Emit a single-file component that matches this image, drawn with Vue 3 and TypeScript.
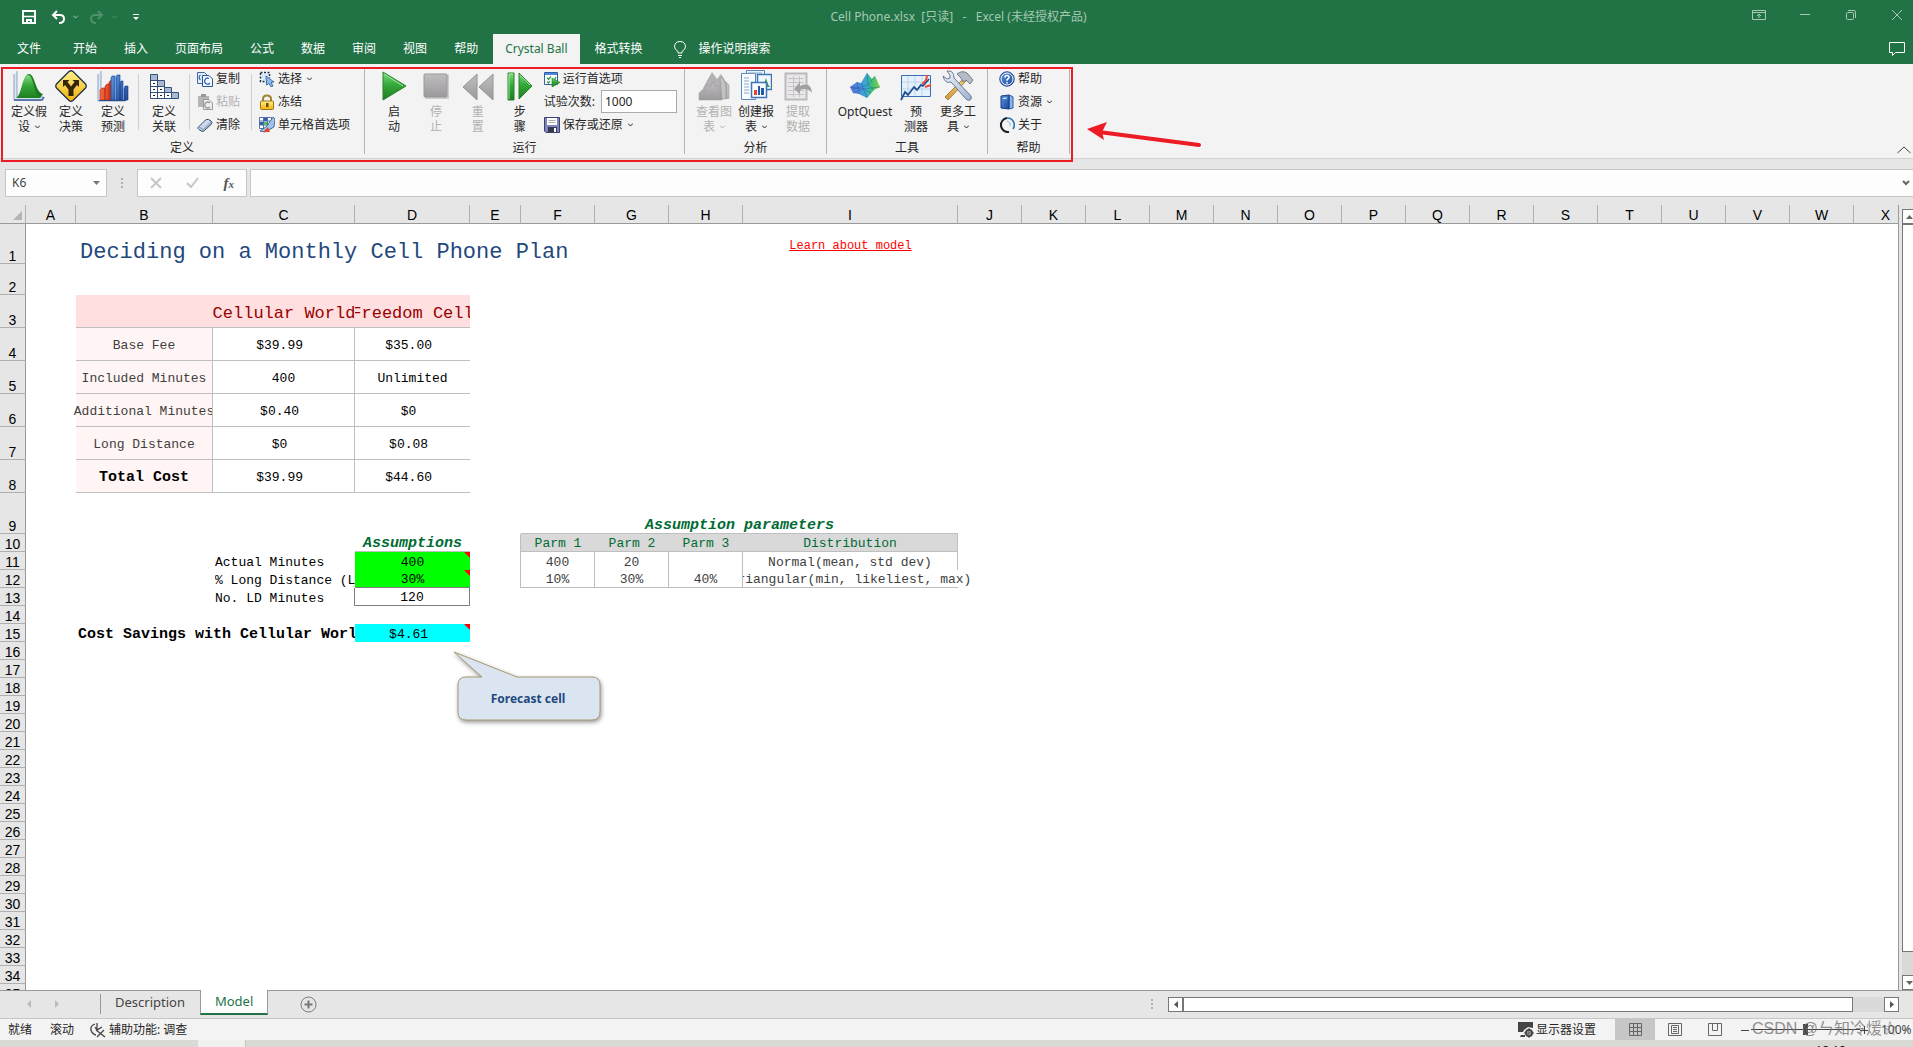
<script setup lang="ts">
import { ref } from 'vue'

interface BigItem { kind: 'big'; icon: string; lines: string[]; caret?: boolean; off?: boolean; wide?: boolean }
interface SmallItem { icon?: string; text: string; caret?: boolean; off?: boolean; input?: boolean }
interface ColItem { kind: 'col'; rows: SmallItem[] }
interface SepItem { kind: 'sep' }
interface Group { name: string; cls: string; items: (BigItem | ColItem | SepItem)[] }
interface Cell { t?: string; c?: string; span?: number; link?: boolean; note?: boolean }

const tabs: string[] = ['文件', '开始', '插入', '页面布局', '公式', '数据', '审阅', '视图', '帮助', 'Crystal Ball', '格式转换']
const trials = ref('1000')
const zoom = ref(50)

const groups: Group[] = [
  {
    name: '定义', cls: 'g-define', items: [
      { kind: 'big', icon: 'assume', lines: ['定义假', '设'], caret: true },
      { kind: 'big', icon: 'decide', lines: ['定义', '决策'] },
      { kind: 'big', icon: 'forecast', lines: ['定义', '预测'] },
      { kind: 'sep' },
      { kind: 'big', icon: 'correl', lines: ['定义', '关联'] },
      { kind: 'sep' },
      { kind: 'col', rows: [{ icon: 'copy', text: '复制' }, { icon: 'paste', text: '粘贴', off: true }, { icon: 'clear', text: '清除' }] },
      { kind: 'sep' },
      { kind: 'col', rows: [{ icon: 'select', text: '选择', caret: true }, { icon: 'lock', text: '冻结' }, { icon: 'cells', text: '单元格首选项' }] },
    ],
  },
  {
    name: '运行', cls: 'g-run', items: [
      { kind: 'big', icon: 'play', lines: ['启', '动'] },
      { kind: 'big', icon: 'stop', lines: ['停', '止'], off: true },
      { kind: 'big', icon: 'rewind', lines: ['重', '置'], off: true },
      { kind: 'big', icon: 'step', lines: ['步', '骤'] },
      { kind: 'col', rows: [{ icon: 'runpref', text: '运行首选项' }, { text: '试验次数:', input: true }, { icon: 'save', text: '保存或还原', caret: true }] },
    ],
  },
  {
    name: '分析', cls: 'g-analyze', items: [
      { kind: 'big', icon: 'charts', lines: ['查看图', '表'], caret: true, off: true },
      { kind: 'big', icon: 'report', lines: ['创建报', '表'], caret: true },
      { kind: 'big', icon: 'extract', lines: ['提取', '数据'], off: true },
    ],
  },
  {
    name: '工具', cls: 'g-tools', items: [
      { kind: 'big', icon: 'opt', lines: ['OptQuest'], wide: true },
      { kind: 'big', icon: 'predict', lines: ['预', '测器'] },
      { kind: 'big', icon: 'tools', lines: ['更多工', '具'], caret: true },
    ],
  },
  {
    name: '帮助', cls: 'g-help', items: [
      { kind: 'col', rows: [{ icon: 'help', text: '帮助' }, { icon: 'book', text: '资源', caret: true }, { icon: 'about', text: '关于' }] },
    ],
  },
]

const icons: Record<string, string> = {
  assume: '<path d="M1 5 4 1V27H30L28 30H1Z" fill="#dbe6f5"/><path d="M1 4V30H28M4 1V27H30" fill="none" stroke="#8fa3c0"/><path d="M1 30H29L31 27" fill="none" stroke="#3d5f9e" stroke-width="1.5"/><path d="M5 28C10 24 10 4 16 4 22 4 22 22 30 24L27 28Z" fill="#1d7a22"/><path d="M3 28C9 25 9 5 15 5 21 5 20 24 27 28Z" fill="url(#gGreen)"/>',
  decide: '<path d="M14 1.500Q16 0 18 1.500L30.500 14Q32 16 30.500 18L18 30.500Q16 32 14 30.500L1.500 18Q0 16 1.500 14Z" fill="url(#gYellow)" stroke="#23304a" stroke-width="1.300"/><path d="M13.500 26V19.500L10 15 8 17V10H14.500L12.500 12 16 16.500 19.500 12 17.500 10H24V17L22 15 18.500 19.500V26Z" fill="#33260a"/>',
  forecast: '<path d="M1 5 4 1V27H30L28 31H1Z" fill="#dbe6f5"/><path d="M1 4V31H28M4 1V27" fill="none" stroke="#8fa3c0"/><path d="M3 20 5 18H8V30H3ZM8 16 10 14H13V30H8ZM12 12 14 10H15V30H12Z" fill="url(#gRed)" stroke="#b02a12" stroke-width=".6"/><path d="M14 8 15 6H18V30H14ZM19 7 20 5H23V30H19ZM23 13 24 11H26V30H23ZM27 19 28 16H31V30H27Z" fill="url(#gBlue)" stroke="#173c86" stroke-width=".6"/><path d="M2 30.500H29L31 28" fill="none" stroke="#274b8f"/>',
  correl: '<path d="M2.500 4.500H9.500V10.500H16.500V17.500H23.500V22.500H30.500V28.500H2.500Z" fill="#fff" stroke="#324f80"/><path d="M3 5H9V10H3ZM10 11H16V17H10ZM17 18H23V22H17ZM24 23H30V28H24Z" fill="#a9bad0"/><path d="M2.500 10.500H9.500V28M2.500 16.500H16.500V28M2.500 22.500H23.500V28" fill="none" stroke="#324f80"/><path d="M5 13.500H7M5 19.500H7M5 25.500H7M12 19.500H14M12 25.500H14M19 25.500H21" stroke="#222"/>',
  copy: '<path d="M.5 1.500H7.500L10.500 4.500V12.500H.5Z" fill="#e4ecf8" stroke="#4267a5"/><path d="M5.500 4.500H12L15.500 8V15.500H5.500Z" fill="#f4f8ff" stroke="#2e559b"/><path d="M12 7.500A3 3 0 1 0 13 12M3.500 4A3 3 0 0 0 3.500 9" fill="none" stroke="#3e6cba" stroke-width="1.300"/>',
  paste: '<path d="M1 2H12V13H1Z" fill="#b5b5b5"/><path d="M4 0H9V3H4Z" fill="#999"/><path d="M6.500 5.500H12L15.500 9V15.500H6.500Z" fill="#eee" stroke="#999"/><path d="M13 9A3 3 0 1 0 13 13" fill="none" stroke="#999" stroke-width="1.300"/>',
  clear: '<path d="M1 10.500 8.500 3Q10 2 11.500 2.500L14 4Q15.500 5.500 14.500 7L7.500 13.500Q6 15 4.500 14L2 12.500Q.5 11.500 1 10.500Z" fill="url(#gIce)" stroke="#33476e"/><path d="M2 10 6.500 12.500 14 5.500" fill="none" stroke="#7b93b8"/>',
  select: '<path d="M1.500 2V10.500H8M1.500 1.500H10.500V7" fill="none" stroke="#16304f" stroke-width="1.500" stroke-dasharray="2 1.500"/><path d="M3 3H9V9H3Z" fill="#d6e8fb"/><path d="M7 5 15 11 12 11.500 14 15 12 16 10 12.500 7.500 14Z" fill="#8dbbea" stroke="#2a5690" stroke-width=".8"/>',
  lock: '<path d="M4 8V5Q4 1.500 8 1.500T12 5V8" fill="none" stroke="#a28332" stroke-width="2"/><rect x="1.500" y="7" width="13" height="8.500" rx="1" fill="url(#gYellow)" stroke="#9d7515"/><path d="M7 9H9.500V13H7Z" fill="#6b4b0c"/>',
  cells: '<path d="M.5 .5H12.500V11.500H.5Z" fill="#fff" stroke="#5671a8"/><path d="M4.500 0V12M8.500 0V12M0 4H12M0 8H12" stroke="#5671a8"/><path d="M5 1H8V4H5ZM1 5H4V8H1Z" fill="#2b60b8"/><path d="M5 5H8V8H5Z" fill="#52c152"/><path d="M14 0 16 2 15 10 6 15 1 14 8 9Z" fill="#9fc3ea" stroke="#2a538f" stroke-width=".8"/><path d="M4 15 9 10 11 15Z" fill="#e2462a"/>',
  play: '<path d="M5 2 28 16 5 30Z" fill="url(#gGreen)" stroke="#27812b"/><path d="M6 4 25 16" stroke="#9be79d"/>',
  stop: '<rect x="5" y="5" width="24" height="24" fill="#ccc"/><rect x="4" y="4" width="23" height="23" rx="1" fill="url(#gGray)" stroke="#999"/>',
  rewind: '<path d="M15 4V30L1 17ZM31 4V30L17 17Z" fill="url(#gGray)" stroke="#969496"/>',
  step: '<path d="M4 3H10V30H4Z" fill="url(#gGreen)" stroke="#27812b"/><path d="M15 3 28 16 15 29Z" fill="url(#gGreen)" stroke="#27812b"/><path d="M5 29V4H9M16 5 26 15" fill="none" stroke="#9be79d"/>',
  runpref: '<path d="M.5 1.500H13.500V13.500H.5Z" fill="#fff" stroke="#2f5ea8"/><path d="M1 2H13V4H1Z" fill="#4f86d5"/><path d="M3 6.500 4.500 8.500 7 5.500M3 10.500 4.500 12 6 10M8 8.500 10 10 12 6" fill="none" stroke="#2a9a3a" stroke-width="1.200"/><path d="M8 7 16 11.500 8 16Z" fill="url(#gGreen)" stroke="#1f7c26" stroke-width=".6"/>',
  save: '<path d="M.5 .5H15.500V15.500H2L.5 14Z" fill="#7f85bf" stroke="#3b4168"/><path d="M3 1H13V8H3Z" fill="#fff"/><path d="M4.500 3.500H11.500M4.500 5.500H11.500" stroke="#aaa"/><path d="M4 10H13V15H4Z" fill="#343a4c"/><path d="M10 11H12V15H10Z" fill="#fff"/>',
  charts: '<path d="M4 20 10 9 14 2 19 9 23 4 28 12 31 29H6Z" fill="#b3b1b3"/><path d="M22 9 24 7 28 14V29H24ZM28 12 31 15V28H29Z" fill="#c3c1c3" stroke="#8e8c8e" stroke-width=".5"/><path d="M1 30V23L4 20 6 22 9 14 12 17 15 12 18 17 21 15 24 30Z" fill="url(#gGray)" stroke="#999" stroke-width=".5"/>',
  report: '<path d="M6.500 .5H24.500V23H6.500Z" fill="#eaf2fc" stroke="#5b88bc"/><path d="M1.500 3.500H15.500V29.500H1.500Z" fill="#f8fbff" stroke="#5b88bc"/><path d="M4 8H9M4 11H9M4 14H9M4 17H9M4 20H9M4 23H9M8 3H22" stroke="#8da8c8"/><path d="M17.500 4.500H31.500V19.500H17.500Z" fill="#f3f8ff" stroke="#3d75b6" stroke-width="1.500"/><path d="M22 16Q24 14 26 8 28 15 30 17H22Z" fill="#3da442"/><path d="M11.500 12.500H26.500V27.500H11.500Z" fill="#f8fbff" stroke="#3d75b6" stroke-width="1.500"/><path d="M14 20H17V25H14Z" fill="#e04527"/><path d="M18 16H20V25H18ZM21 18H24V25H21Z" fill="#2359ae"/>',
  extract: '<rect x="3.500" y="3.500" width="21" height="26" fill="#e9e7e9" stroke="#bcbabc" stroke-width="2"/><path d="M6 8.500H22M6 12.500H22M6 16.500H22M6 20.500H22M6 24.500H22M11.500 6V27M17.500 6V27" stroke="#c6c4c6"/><path d="M12 19 18 12V16Q29 11 30 23 25 17 18 20V24Z" fill="#a3a1a3"/>',
  opt: '<path d="M1 17 8 12 12 13 18 3 23 9 26 6 31 17 25 20 18 28 10 24 4 23Z" fill="url(#gSpec)"/><path d="M8 12 10 24M12 13 18 28M18 3 19 15 25 20M26 6 19 15 4 19M1 17 14 19 31 17M4 23 14 19 22 23" fill="none" stroke="#2b4f9a" stroke-opacity=".6" stroke-width=".7"/>',
  predict: '<path d="M1.500 5.500H30.500V26.500H1.500Z" fill="#e5f1fc" stroke="#3a6eb0"/><path d="M2 12H30M2 19H30M8 6V26M15 6V26M22 6V26" stroke="#bcd3ea"/><path d="M1 30 5 22 8 25 14 17 17 20 21 15 23 16 29 9" fill="none" stroke="#1f4f91" stroke-width="1.800"/><path d="M22 14Q27 11 27 5M25 17 31 15" fill="none" stroke="#ef4a32" stroke-width="2"/>',
  tools: '<path d="M25 10 6 30 3 27 22 8Z" fill="url(#gWood)" stroke="#8a6119" stroke-width=".7"/><path d="M15 4Q20 0 25 3L31 10 28 14 24 10 21 12 19 8Z" fill="#b5bcc7" stroke="#5c6675" stroke-width=".8"/><path d="M1 6 5 9 8 8 8 5 5 1Q12 0 12 8L29 26Q30 29 28 30 26 31 24 29L9 12Q3 14 1 6Z" fill="url(#gIce)" stroke="#5b6b84" stroke-width=".9"/>',
  help: '<circle cx="8" cy="8" r="7.200" fill="url(#gBlue)" stroke="#174289"/><circle cx="8" cy="8" r="6" fill="none" stroke="#fff"/><path d="M6 6.500Q6 4.500 8 4.500T10 6.500Q10 7.500 8.500 8.300 8 8.600 8 9.800M8 11V12.500" fill="none" stroke="#fff" stroke-width="1.600"/>',
  book: '<path d="M2 2 10 1V15L2 14Z" fill="url(#gBlue)" stroke="#173d82"/><path d="M10.500 1 14 3V14L10.500 15Z" fill="#8fb5e8" stroke="#2d5ca6"/><path d="M4 4.500 8 4" stroke="#fff"/>',
  about: '<path d="M10 15A7 7 0 1 1 8 1" fill="none" stroke="#171c25" stroke-width="2"/><path d="M8 1A7 7 0 0 1 14 12" fill="none" stroke="#2770bb" stroke-width="1.600"/><path d="M8 4Q12 5 11 9" fill="none" stroke="#82b5e5"/>',
}

const cols: string[] = 'ABCDEFGHIJKLMNOPQRSTUVWX'.split('')
const colClass = (c: string): string => ('ABCDEI'.includes(c) ? 'w-' + c.toLowerCase() : 'FGH'.includes(c) ? 'w-f' : 'w-n')
const rows: number[] = Array.from({ length: 35 }, (_, i) => i + 1)
const rowClass = (r: number): string => (r === 1 ? 'h1' : r === 2 ? 'h2' : r < 9 ? 'h3' : r === 9 ? 'h9' : 'h10')

const cells: Record<string, Cell> = {
  B1: { t: 'Deciding on a Monthly Cell Phone Plan', c: 'title', span: 5 },
  I1: { t: 'Learn about model', c: 'mid', link: true },
  B3: { c: 'pink line' }, C3: { t: 'Cellular World', c: 'pink line mid cut' }, D3: { t: 'Freedom Cell', c: 'pink line mid cut' },
  B4: { t: 'Base Fee', c: 'side' }, C4: { t: '$39.99 ', c: 'box' }, D4: { t: '$35.00 ', c: 'line mid' },
  B5: { t: 'Included Minutes', c: 'side' }, C5: { t: '400', c: 'box' }, D5: { t: 'Unlimited', c: 'line mid' },
  B6: { t: 'Additional Minutes', c: 'side cut-right' }, C6: { t: '$0.40 ', c: 'box' }, D6: { t: '$0 ', c: 'line mid' },
  B7: { t: 'Long Distance', c: 'side' }, C7: { t: '$0 ', c: 'box' }, D7: { t: '$0.08 ', c: 'line mid' },
  B8: { t: 'Total Cost', c: 'side strong' }, C8: { t: '$39.99 ', c: 'box' }, D8: { t: '$44.60 ', c: 'line mid' },
  F9: { t: 'Assumption parameters', c: 'line mid heading low', span: 4 },
  D10: { t: 'Assumptions', c: 'line mid heading' }, E10: { c: 'edge' },
  F10: { t: 'Parm 1', c: 'param' }, G10: { t: 'Parm 2', c: 'param' }, H10: { t: 'Parm 3', c: 'param' }, I10: { t: 'Distribution', c: 'param edge' },
  C11: { t: 'Actual Minutes', c: 'cut pad' }, D11: { t: '400', c: 'green mid', note: true }, E11: { c: 'edge' },
  F11: { t: '400', c: 'edge mid gray' }, G11: { t: '20', c: 'edge mid gray' }, H11: { c: 'edge' }, I11: { t: 'Normal(mean, std dev)', c: 'edge mid gray' },
  C12: { t: '% Long Distance (LD)', c: 'cut pad' }, D12: { t: '30%', c: 'green mid dark-b', note: true }, E12: { c: 'edge' },
  F12: { t: '10%', c: 'edge line mid gray' }, G12: { t: '30%', c: 'edge line mid gray' }, H12: { t: '40%', c: 'edge line mid gray' },
  I12: { t: 'Triangular(min, likeliest, max)', c: 'line mid gray cut-left' },
  C13: { t: 'No. LD Minutes', c: 'cut pad dark-r' }, D13: { t: '120', c: 'mid dark-r dark-b' },
  B15: { t: 'Cost Savings with Cellular World', c: 'cut pad strong', span: 2 }, D15: { t: '$4.61 ', c: 'cyan mid', note: true },
}

// Columns of one row, leaving out those that a spanning cell covers.
const shown = (r: number): string[] => {
  const out: string[] = []
  for (let i = 0; i < cols.length;) {
    out.push(cols[i])
    i += cells[cols[i] + r]?.span ?? 1
  }
  return out
}
const cell = (c: string, r: number): Cell => cells[c + r] ?? {}
</script>

<template>
  <div class="app">
    <svg class="defs" width="0" height="0" aria-hidden="true">
      <defs>
        <linearGradient id="gGreen" x1="0" y1="0" x2="0" y2="1"><stop offset="0" stop-color="#7fdc80" /><stop offset=".45" stop-color="#36a83b" /><stop offset="1" stop-color="#1c7f20" /></linearGradient>
        <linearGradient id="gYellow" x1="0" y1="0" x2="0" y2="1"><stop offset="0" stop-color="#fff08a" /><stop offset="1" stop-color="#f0b20c" /></linearGradient>
        <linearGradient id="gRed" x1="0" y1="0" x2="1" y2="0"><stop offset="0" stop-color="#f4683e" /><stop offset="1" stop-color="#d83a1c" /></linearGradient>
        <linearGradient id="gBlue" x1="0" y1="0" x2="1" y2="1"><stop offset="0" stop-color="#5a98e6" /><stop offset="1" stop-color="#1b4596" /></linearGradient>
        <linearGradient id="gIce" x1="0" y1="0" x2="1" y2="1"><stop offset="0" stop-color="#f2f7fe" /><stop offset="1" stop-color="#9db2d1" /></linearGradient>
        <linearGradient id="gGray" x1="0" y1="0" x2="0" y2="1"><stop offset="0" stop-color="#bfbdbf" /><stop offset="1" stop-color="#9b999b" /></linearGradient>
        <linearGradient id="gSpec" x1="0" y1="0" x2="1" y2="0"><stop offset="0" stop-color="#5a6fe0" /><stop offset=".5" stop-color="#3aa5d8" /><stop offset=".75" stop-color="#3cc46e" /><stop offset="1" stop-color="#8fd04a" /></linearGradient>
        <linearGradient id="gWood" x1="1" y1="0" x2="0" y2="1"><stop offset="0" stop-color="#f3cf7a" /><stop offset="1" stop-color="#d19a35" /></linearGradient>
      </defs>
    </svg>

    <header class="top">
      <div class="titlebar">
        <div class="qat">
          <button class="ic" aria-label="保存"><svg width="14" height="14" fill="none" stroke="#fff" stroke-width="2"><path d="M1 1H13V13H1Z" /><path d="M2 6.500H12" stroke-width="1.500" /><path d="M4 9H10V13H8V11H6V13H4Z" fill="#fff" stroke="none" /></svg></button>
          <button class="ic undo" aria-label="撤消"><svg width="14" height="14" fill="none" stroke="#fff" stroke-width="2"><path d="M6 1 2 5 6 9M2 5H9Q13 5 13 9T8 13" /></svg></button>
          <button class="ic car" aria-label="撤消列表"><svg width="5" height="4" fill="none" stroke="#a5c9b3"><path d="M0 .5 2.500 3 5 .5" /></svg></button>
          <button class="ic redo" aria-label="恢复"><svg width="14" height="14" fill="none" stroke="#4f9069" stroke-width="2"><path d="M8 1 12 5 8 9M12 5H5Q1 5 1 9T6 13" /></svg></button>
          <button class="ic car" aria-label="恢复列表"><svg width="5" height="4" fill="none" stroke="#4f9069"><path d="M0 .5 2.500 3 5 .5" /></svg></button>
          <button class="ic cust" aria-label="自定义快速访问工具栏"><svg width="6" height="6" fill="#fff"><path d="M0 0H6V1H0ZM0 3H6L3 6Z" /></svg></button>
        </div>
        <div class="doc">Cell Phone.xlsx&nbsp; [只读]&nbsp;&nbsp; -&nbsp;&nbsp; Excel (未经授权产品)</div>
        <div class="win">
          <button class="ic" aria-label="功能区显示选项"><svg width="14" height="14" fill="none" stroke="#a5c9b3"><path d="M.5 2.500H13.500V11.500H.5ZM.5 4.500H13.500M7 10V6M5 8 7 6 9 8" /></svg></button>
          <button class="ic" aria-label="最小化"><svg width="14" height="14" fill="none" stroke="#a5c9b3"><path d="M2 6.500H12" /></svg></button>
          <button class="ic" aria-label="还原"><svg width="14" height="14" fill="none" stroke="#a5c9b3"><rect x="2.500" y="4.500" width="7" height="7" rx="1" /><path d="M4 2.500H10Q11.500 2.500 11.500 4V10" /></svg></button>
          <button class="ic" aria-label="关闭"><svg width="14" height="14" fill="none" stroke="#a5c9b3"><path d="M2 2 12 12M12 2 2 12" /></svg></button>
        </div>
      </div>
      <nav class="tabs">
        <button v-for="t in tabs" :key="t" class="tab" :class="{ active: t === 'Crystal Ball', file: t === '文件' }">{{ t }}</button>
        <button class="tell">
          <svg width="12" height="17" fill="none" stroke="#fff"><path d="M4 12V10.500Q.5 8.500 .5 5.500 1 .5 6 .5T11.500 5.500Q11.500 8.500 8 10.500V12ZM4 14.500H8M5 16.500H7" /></svg>
          操作说明搜索
        </button>
        <button class="ic comment" aria-label="批注"><svg width="16" height="15" fill="none" stroke="#fff"><path d="M.5 .5H15.500V10.500H6.500L3.500 13.500V10.500H.5Z" /></svg></button>
      </nav>
    </header>

    <section class="ribbon">
      <div v-for="g in groups" :key="g.cls" class="group" :class="g.cls">
        <div class="body">
          <template v-for="(it, i) in g.items" :key="i">
            <i v-if="it.kind === 'sep'" class="sep"></i>
            <button v-else-if="it.kind === 'big'" class="big" :class="{ off: it.off, wide: it.wide }" :disabled="it.off">
              <svg width="32" height="32" viewBox="0 0 32 32" v-html="icons[it.icon]"></svg>
              <span v-for="(l, n) in it.lines" :key="n" class="ln">{{ l }}<svg v-if="it.caret && n === 1" class="caret" width="5" height="4" fill="none" stroke="currentColor"><path d="M0 .5 2.500 3 5 .5" /></svg></span>
            </button>
            <div v-else class="col">
              <template v-for="s in it.rows" :key="s.text">
                <label v-if="s.input" class="small">{{ s.text }}<input v-model="trials" type="text" class="trials" /></label>
                <button v-else class="small" :class="{ off: s.off }" :disabled="s.off">
                  <svg width="16" height="16" viewBox="0 0 16 16" v-html="icons[s.icon ?? '']"></svg>{{ s.text }}<svg v-if="s.caret" class="caret" width="5" height="4" fill="none" stroke="currentColor"><path d="M0 .5 2.500 3 5 .5" /></svg>
                </button>
              </template>
            </div>
          </template>
        </div>
        <div class="gname">{{ g.name }}</div>
      </div>
      <button class="ic collapse" aria-label="折叠功能区"><svg width="14" height="8" fill="none" stroke="#444"><path d="M.5 7 7 1 13.500 7" /></svg></button>
      <div class="frame"></div>
      <svg class="arrow" width="118" height="30"><path d="M13 12 113 25" stroke="#ed1c24" stroke-width="4" stroke-linecap="round" /><path d="M1 9 21 2 16 12 18 20Z" fill="#ed1c24" /></svg>
    </section>

    <section class="fbar">
      <button class="name">K6<svg width="7" height="4" fill="#777"><path d="M0 0H7L3.500 4Z" /></svg></button>
      <svg class="dots" width="2" height="11" fill="#b0b0b0"><path d="M0 0H2V2H0ZM0 4H2V6H0ZM0 8H2V10H0Z" /></svg>
      <div class="fx">
        <button class="ic" aria-label="取消"><svg width="12" height="12" fill="none" stroke="#c6c6c6" stroke-width="2"><path d="M1 1 11 11M11 1 1 11" /></svg></button>
        <button class="ic" aria-label="输入"><svg width="13" height="12" fill="none" stroke="#c6c6c6" stroke-width="2"><path d="M1 6 5 10 12 1" /></svg></button>
        <button class="ic fn">f<sub>x</sub></button>
      </div>
      <div class="formula">
        <input type="text" aria-label="编辑栏" />
        <svg width="8" height="6" fill="none" stroke="#666" stroke-width="2"><path d="M1 1 4 4 7 1" /></svg>
      </div>
    </section>

    <main class="work">
      <div class="sheet">
        <table>
          <colgroup><col class="w-head" /><col v-for="c in cols" :key="c" :class="colClass(c)" /></colgroup>
          <thead>
            <tr>
              <th class="corner"><svg width="9" height="9" fill="#b4b4b4"><path d="M9 0V9H0Z" /></svg></th>
              <th v-for="c in cols" :key="c" scope="col">{{ c }}</th>
            </tr>
          </thead>
          <tbody>
            <tr v-for="r in rows" :key="r" :class="rowClass(r)">
              <th scope="row">{{ r }}</th>
              <td v-for="c in shown(r)" :key="c" :colspan="cell(c, r).span" :class="cell(c, r).c">
                <a v-if="cell(c, r).link" href="#" class="txt">{{ cell(c, r).t }}</a>
                <div v-else-if="cell(c, r).t" class="txt">{{ cell(c, r).t }}</div>
                <i v-if="cell(c, r).note" class="note"></i>
              </td>
            </tr>
          </tbody>
        </table>
        <div class="callout">
          <svg width="160" height="80"><path d="M1 1 64 26H139Q147 26 147 34V61Q147 69 139 69H13Q5 69 5 61V34Q5 26 13 26H29Z" fill="#dbe5f1" stroke="#a8996f" /></svg>
          <span>Forecast cell</span>
        </div>
      </div>
      <div class="vscroll">
        <button class="vb" aria-label="向上"><svg width="7" height="4" fill="#666"><path d="M0 4H7L3.500 0Z" /></svg></button>
        <div class="vthumb"></div>
        <button class="vb" aria-label="向下"><svg width="7" height="4" fill="#666"><path d="M0 0H7L3.500 4Z" /></svg></button>
      </div>
    </main>

    <section class="sheets">
      <button class="ic nav" aria-label="上一张"><svg width="4" height="8" fill="#bbb"><path d="M4 0V8L0 4Z" /></svg></button>
      <button class="ic nav" aria-label="下一张"><svg width="4" height="8" fill="#bbb"><path d="M0 0V8L4 4Z" /></svg></button>
      <i class="bar"></i>
      <button class="stab">Description</button>
      <button class="stab on">Model</button>
      <button class="ic add" aria-label="新工作表"><svg width="17" height="17" fill="none" stroke="#777"><circle cx="8.500" cy="8.500" r="7.500" /><path d="M4.500 8.500H12.500M8.500 4.500V12.500" stroke-width="2" /></svg></button>
      <svg class="hdots" width="2" height="11" fill="#b0b0b0"><path d="M0 0H2V2H0ZM0 4H2V6H0ZM0 8H2V10H0Z" /></svg>
      <div class="hscroll">
        <button class="hb" aria-label="向左"><svg width="4" height="7" fill="#555"><path d="M4 0V7L0 3.500Z" /></svg></button>
        <div class="hthumb"></div>
        <button class="hb" aria-label="向右"><svg width="4" height="7" fill="#555"><path d="M0 0V7L4 3.500Z" /></svg></button>
      </div>
    </section>

    <footer class="status">
      <span>就绪</span>
      <span class="scroll">滚动</span>
      <button class="ic acc"><svg width="16" height="16" fill="none" stroke="#444" stroke-width="1.300"><path d="M5 2Q0 4 1 8T6 13M7 1V8M5 5 7 8 12 5M6 8 15 15M14 8 7 15" /></svg>辅助功能: 调查</button>
      <button class="ic disp"><svg width="16" height="16" fill="#444"><path d="M0 0H15V6L10 5 6 8 5 10H0ZM3 13H7V15H2Z" /><circle cx="11" cy="11" r="3" fill="none" stroke="#444" stroke-width="2" /><path d="M10.500 6H11.500V16H10.500ZM6 10.500H16V11.500H6Z" /></svg>显示器设置</button>
      <button class="ic view cur" aria-label="普通"><svg width="13" height="13" fill="none" stroke="#666"><path d="M.5 .5H12.500V12.500H.5ZM.5 4.500H12.500M.5 8.500H12.500M4.500 .5V12.500M8.500 .5V12.500" /></svg></button>
      <button class="ic view" aria-label="页面布局视图"><svg width="14" height="13" fill="none" stroke="#666"><path d="M.5 .5H13.500V12.500H.5ZM3.500 2.500H10.500V10.500H3.500ZM5 4.500H9M5 6.500H9M5 8.500H9" /></svg></button>
      <button class="ic view" aria-label="分页预览"><svg width="14" height="13" fill="none" stroke="#666"><path d="M.5 .5H13.500V12.500H.5ZM4.500 .5V7.500H9.500V.5" /></svg></button>
      <button class="ic zb" aria-label="缩小"><svg width="8" height="8" stroke="#444"><path d="M0 4.500H8" /></svg></button>
      <input v-model.number="zoom" class="zoom" type="range" min="0" max="100" aria-label="缩放" />
      <button class="ic zb" aria-label="放大"><svg width="8" height="8" stroke="#444"><path d="M0 4.500H8M4.500 0V8" /></svg></button>
      <span class="pct">100%</span>
      <div class="mark">CSDN @ㄣ知冷煖☆</div>
    </footer>
    <div class="taskbar"><i></i><b></b><span>18:18</span></div>
  </div>
</template>

<style>
html, body, #app { height: 100%; }
body { margin: 0; overflow: hidden; }
</style>

<style scoped>
.app { position: relative; display: flex; flex-direction: column; height: 100vh; overflow: hidden; background: #e6e6e6; color: #262626; font: 12px/16px "Noto Sans", "Noto Sans CJK SC", sans-serif; }
.app * { box-sizing: border-box; }
.defs { position: absolute; }
button, input { margin: 0; padding: 0; border: 0; background: none; color: inherit; font: inherit; }
svg { display: block; flex: none; }
.ic { display: flex; align-items: center; justify-content: center; flex: none; }

.top { background: #217346; color: #fff; }
.titlebar { display: grid; grid-template-columns: 1fr auto 1fr; align-items: center; height: 34px; }
.qat { display: flex; align-items: center; padding-left: 22px; }
.undo { margin-left: 15px; }
.car { margin-left: 8px; }
.redo { margin-left: 12px; }
.cust { margin-left: 16px; }
.doc { padding-left: 4px; color: #a5c9b3; white-space: nowrap; }
.win { display: flex; justify-content: flex-end; gap: 32px; padding: 0 9px 4px 0; }
.tabs { display: flex; align-items: stretch; gap: 3px; height: 30px; padding-left: 5px; }
.tab { padding: 0 12px; white-space: nowrap; }
.file { margin-right: 5px; }
.tab.active { background: #f3f3f3; color: #217346; }
.tell { display: flex; align-items: center; gap: 13px; margin-left: 16px; white-space: nowrap; }
.comment { margin: 0 8px 0 auto; }

.ribbon { position: relative; display: flex; flex: none; height: 95px; padding-top: 4px; background: #f3f3f3; border-bottom: 1px solid #d2d2d2; }
.group { flex: none; height: 86px; border-right: 1px solid #b5b5b5; }
.body { display: flex; height: 69px; padding-left: 8px; }
.g-define { width: 365px; }
.g-run { width: 320px; }
.g-analyze { width: 142px; }
.g-tools { width: 161px; }
.g-help { width: 82px; }
.gname { padding-top: 3px; text-align: center; line-height: 16px; }
.sep { width: 1px; height: 56px; margin: 6px 4px 0; background: #cfcfcf; }
.big { display: flex; flex-direction: column; align-items: center; width: 42px; padding-top: 2px; line-height: 15px; }
.big > svg { margin-bottom: 2px; }
.big.wide { width: 60px; }
.ln { display: flex; align-items: center; white-space: nowrap; }
.caret { margin-left: 5px; }
.small .caret { margin-left: 2px; }
.off { color: #b1b1b1; }
.col { margin-top: -1px; padding: 0 7px 0 3px; }
.small { display: flex; align-items: center; gap: 3px; height: 23px; white-space: nowrap; }
.trials { width: 76px; height: 23px; margin-left: 3px; padding-left: 3px; border: 1px solid #ababab; background: #fff; font-size: 12px; }
.collapse { align-self: flex-end; margin: 0 2px 4px auto; }
.frame { position: absolute; left: 1px; top: 3px; width: 1072px; height: 95px; border: 2px solid #ed1c24; z-index: 2; }
.arrow { position: absolute; left: 1086px; top: 56px; z-index: 2; }

.fbar { display: flex; align-items: center; flex: none; height: 46px; padding: 10px 0 8px 5px; }
.name { display: flex; align-items: center; justify-content: space-between; width: 102px; height: 28px; padding: 0 6px; border: 1px solid #c6c6c6; background: #fdfdfd; color: #444; }
.dots { margin: 0 14px 0 14px; }
.fx { display: flex; align-items: center; justify-content: space-around; width: 110px; height: 28px; border: 1px solid #c6c6c6; background: #fdfdfd; }
.fn { display: block; color: #555; font: italic bold 15px/18px "Liberation Serif", serif; }
.fn sub { font-size: 11px; vertical-align: baseline; }
.formula { display: flex; align-items: center; flex: 1; height: 28px; margin-left: 3px; padding-right: 3px; border: 1px solid #c6c6c6; border-right: 0; background: #fdfdfd; }
.formula input { flex: 1; height: 26px; padding: 0 6px; }

.work { display: flex; flex: 1; min-height: 0; }
.sheet { position: relative; flex: 1; min-width: 0; overflow: hidden; border-right: 1px solid #999; background: linear-gradient(#e6e6e6 18px, #fff 18px); }
table { width: 1918px; border-collapse: separate; border-spacing: 0; table-layout: fixed; font: 13px/16px "Liberation Mono", monospace; color: #000; }
.w-head { width: 26px; } .w-a { width: 50px; } .w-b { width: 137px; } .w-c { width: 142px; } .w-d { width: 115px; }
.w-e { width: 51px; } .w-f { width: 74px; } .w-i { width: 215px; } .w-n { width: 64px; }
th, td { padding: 0; }
th { background: #e6e6e6; font: 14px/16px "Liberation Sans", sans-serif; }
thead th { height: 19px; border-bottom: 1px solid #999; border-right: 1px solid #b0b0b0; vertical-align: bottom; }
.corner svg { margin: 0 3px 3px auto; }
tbody th { border-right: 1px solid #999; border-bottom: 1px solid #b0b0b0; line-height: 14px; vertical-align: bottom; }
td { position: relative; vertical-align: middle; }
.h1 { height: 40px; } .h2 { height: 31px; } .h3 { height: 33px; } .h9 { height: 41px; } .h10 { height: 18px; }
.txt { display: flex; padding-top: 3px; white-space: pre; }
.h10 .txt, .h9 .txt { padding-top: 2px; line-height: 15px; }
.mid .txt, .side .txt, .box .txt, .param .txt { justify-content: center; }
.title { padding-left: 4px; vertical-align: bottom; color: #1f497d; font-size: 22px; }
.title .txt { line-height: 22px; }
a.txt { color: #f00; font-size: 12px; text-decoration: underline; }
.pink { background: #ffdfdf; color: #900; font-size: 17px; }
.pink .txt { padding-top: 6px; }
.line, .side, .box, .param { border-bottom: 1px solid #bfbfbf; }
.side { background: #fff5f5; color: #404040; }
.side, .box, .edge { border-right: 1px solid #bfbfbf; }
.strong { color: #000; font-weight: bold; font-size: 15px; }
.heading { color: #006b33; font-size: 15px; font-weight: bold; font-style: italic; }
.low { vertical-align: bottom; }
.param { background: #d9d9d9; color: #006b33; }
.gray { color: #404040; }
.green { background: #0f0; }
.cyan { background: #0ff; }
.pad { padding-left: 2px; }
.dark-r { border-right: 1px solid #7f7f7f; }
.dark-b { border-bottom: 1px solid #7f7f7f; }
.cut .txt { clip-path: inset(-4px 0); }
.cut-right .txt { clip-path: inset(-4px 0 -4px -12px); }
.cut-left .txt { clip-path: inset(-4px -24px -4px 0); }
.note { position: absolute; top: 0; right: 0; border-top: 6px solid #f00; border-left: 6px solid transparent; }
.callout { position: absolute; left: 453px; top: 446px; }
.callout svg { filter: drop-shadow(1px 2px 2px rgba(0, 0, 0, .4)); }
.callout span { position: absolute; left: 4px; top: 40px; width: 142px; color: #1f497d; font-weight: bold; text-align: center; }

.vscroll { display: flex; flex-direction: column; flex: none; width: 11px; margin: 4px 0 0 3px; overflow: hidden; background: #dadada; }
.vb { display: flex; align-items: center; justify-content: center; width: 15px; height: 15px; border: 1px solid #777; background: #fff; }
.vthumb { flex: 1; width: 15px; margin-bottom: 23px; border: 1px solid #777; background: #fff; }

.sheets { display: flex; flex: none; height: 28px; border-top: 1px solid #999; }
.nav { width: 4px; height: 26px; }
.nav:first-child { margin: 0 24px 0 27px; }
.bar { width: 1px; height: 20px; margin: 3px 0 0 41px; background: #999; }
.stab { height: 25px; margin-top: -1px; padding: 0 15px 0 14px; color: #444; font-size: 13px; line-height: 25px; }
.stab.on { padding: 0 14px; border: 1px solid #999; border-top: 0; border-bottom: 2px solid #217346; background: #fff; color: #217346; line-height: 23px; }
.add { height: 26px; margin-left: 32px; }
.hdots { margin: 8px 15px 0 auto; }
.hscroll { display: flex; flex: none; width: 38.2%; height: 15px; margin: 6px 14px 0 0; background: #dadada; }
.hb { display: flex; align-items: center; justify-content: center; flex: none; width: 15px; border: 1px solid #777; background: #fff; }
.hthumb { flex: 1; margin-right: 31px; border: 1px solid #777; background: #fff; }

.status { position: relative; display: flex; align-items: center; flex: none; height: 22px; padding-left: 8px; border-top: 1px solid #c6c6c6; background: #f3f3f3; white-space: nowrap; }
.scroll { margin-left: 18px; }
.acc { gap: 3px; margin-left: 16px; }
.disp { gap: 2px; margin: 0 19px 0 auto; }
.view { width: 40px; height: 21px; }
.view.cur { background: #c6c6c6; }
.zb { width: 8px; margin-left: 6px; }
.zb + .zoom { margin-left: 2px; }
.zoom { appearance: none; width: 109px; height: 16px; background: linear-gradient(#444, #444) center / 100% 1px no-repeat; }
.zoom::-webkit-slider-thumb { appearance: none; width: 5px; height: 11px; background: #444; }
.zoom + .zb { margin-left: 0; }
.pct { width: 29px; margin: 0 3px 0 13px; color: #444; }
.mark { position: absolute; right: 15px; top: -1px; color: rgba(115, 115, 115, .8); font: 16px/22px "Liberation Sans", "Noto Sans CJK SC", sans-serif; }
.taskbar { position: relative; display: flex; flex: none; height: 7px; overflow: hidden; background: #d9dad6; }
.taskbar i { width: 48px; margin-left: 198px; background: #f0f0ee; border-right: 1px solid #c3c4bd; }
.taskbar b { flex: 1; }
.taskbar span { padding: 3px 67px 0 0; color: #111; }
</style>
